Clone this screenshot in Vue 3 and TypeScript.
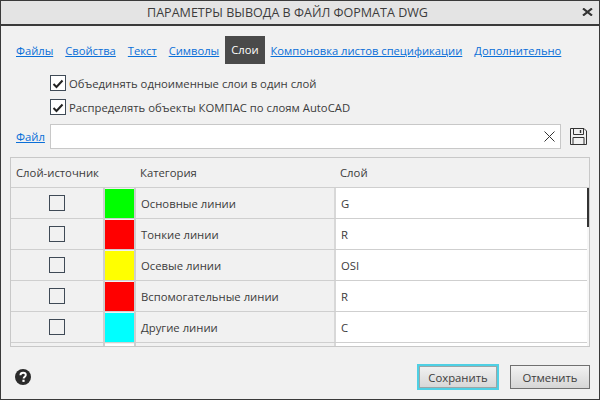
<script setup lang="ts">
const tabs = [
  { label: 'Файлы', active: false },
  { label: 'Свойства', active: false },
  { label: 'Текст', active: false },
  { label: 'Символы', active: false },
  { label: 'Слои', active: true },
  { label: 'Компоновка листов спецификации', active: false },
  { label: 'Дополнительно', active: false },
]
const rows = [
  { color: '#00ff00', name: 'Основные линии', layer: 'G' },
  { color: '#ff0000', name: 'Тонкие линии', layer: 'R' },
  { color: '#ffff00', name: 'Осевые линии', layer: 'OSI' },
  { color: '#ff0000', name: 'Вспомогательные линии', layer: 'R' },
  { color: '#00ffff', name: 'Другие линии', layer: 'C' },
  { color: '#ffffff', name: '', layer: '' },
]
</script>

<template>
  <div class="window">
    <header class="titlebar">
      <span class="title">ПАРАМЕТРЫ ВЫВОДА В ФАЙЛ ФОРМАТА DWG</span>
      <svg class="close" width="11" height="8" viewBox="0 0 11 8">
        <path d="M1 .5 10 7.5M10 .5 1 7.5" stroke="#333" stroke-width="2.2" fill="none" />
      </svg>
    </header>

    <nav class="tabs">
      <a v-for="t in tabs" :key="t.label" class="tab" :class="{ active: t.active }">{{ t.label }}</a>
    </nav>

    <div class="options">
      <label class="check">
        <span class="box">
          <svg width="14" height="14" viewBox="0 0 14 14">
            <path d="M2.5 8 5.5 11 11.5 4.5" stroke="#222" stroke-width="2" fill="none" />
          </svg>
        </span>
        Объединять одноименные слои в один слой
      </label>
      <label class="check">
        <span class="box">
          <svg width="14" height="14" viewBox="0 0 14 14">
            <path d="M2.5 8 5.5 11 11.5 4.5" stroke="#222" stroke-width="2" fill="none" />
          </svg>
        </span>
        Распределять объекты КОМПАС по слоям AutoCAD
      </label>
    </div>

    <div class="file-row">
      <a class="file-link">Файл</a>
      <div class="input">
        <svg width="11" height="11" viewBox="0 0 11 11">
          <path d="M.5 .5 10.5 10.5M10.5 .5 .5 10.5" stroke="#333" stroke-width="1" fill="none" />
        </svg>
      </div>
      <svg class="save" width="17" height="17" viewBox="0 0 17 17">
        <path d="M.5.5H14L16.5 3V16.5H.5Z" fill="none" stroke="#333" />
        <path d="M3.5.5V6.5H13.5V.5" fill="none" stroke="#333" />
        <path d="M10.5 2V5" stroke="#333" stroke-width="1.4" />
        <path d="M3 16.5V9.5H14V16.5" fill="none" stroke="#333" />
      </svg>
    </div>

    <div class="table">
      <div class="thead">
        <span class="h1">Слой-источник</span>
        <span class="h2">Категория</span>
        <span class="h3">Слой</span>
      </div>
      <div class="tbody">
        <div v-for="(r, i) in rows" :key="i" class="row">
          <div class="c-check"><span class="box empty"></span></div>
          <div class="c-color" :style="{ backgroundColor: r.color }"></div>
          <div class="c-name">{{ r.name }}</div>
          <div class="c-layer">{{ r.layer }}</div>
        </div>
        <div class="track"></div>
        <div class="thumb"></div>
      </div>
    </div>

    <footer class="footer">
      <svg class="help" width="16" height="16" viewBox="0 0 16 16">
        <circle cx="8" cy="8" r="8" fill="#2b2b2b" />
        <path d="M5.4 6.2C5.5 4.6 6.6 3.8 8.1 3.8 9.7 3.8 10.8 4.7 10.8 6 10.8 7.6 8.6 7.9 8.6 9.6" fill="none" stroke="#fff" stroke-width="1.9" />
        <rect x="7.4" y="10.7" width="2.2" height="2.2" fill="#fff" />
      </svg>
      <div class="buttons">
        <button class="btn primary">Сохранить</button>
        <button class="btn">Отменить</button>
      </div>
    </footer>
  </div>
</template>

<style scoped>
.window {
  width: 600px;
  height: 400px;
  box-sizing: border-box;
  border: 1px solid #3a3a3a;
  background: #f1f1f1;
  display: flex;
  flex-direction: column;
  font-family: "Open Sans", "Noto Sans", sans-serif;
  font-size: 11.3px;
  color: #3c3c3c;
  overflow: hidden;
}
.titlebar {
  height: 23px;
  flex: none;
  background: #e4e4e4;
  border-bottom: 2px solid #3a3a3a;
  display: flex;
  align-items: center;
  justify-content: center;
  position: relative;
  padding-right: 25px;
  font-size: 12.55px;
}
.close {
  position: absolute;
  right: 6px;
  top: 7px;
}
.tabs {
  display: flex;
  align-items: center;
  height: 28px;
  margin-top: 10px;
  padding-left: 15px;
  gap: 12px;
  font-size: 11.2px;
}
.tab {
  color: #0a6fd8;
  text-decoration: underline;
}
.tab.active {
  background: #4a4a4a;
  color: #fff;
  text-decoration: none;
  height: 28px;
  line-height: 28px;
  padding: 0 6px;
  margin: 0 -6px;
}
.options {
  margin-top: 11px;
  padding-left: 49px;
  display: flex;
  flex-direction: column;
  gap: 8px;
}
.check {
  display: flex;
  align-items: center;
  gap: 3px;
  height: 16px;
}
.box {
  width: 16px;
  height: 16px;
  box-sizing: border-box;
  border: 1px solid #3f4a56;
  background: #fff;
  display: flex;
  align-items: center;
  justify-content: center;
  flex: none;
}
.file-row {
  margin-top: 9px;
  padding-left: 15px;
  display: flex;
  align-items: center;
  height: 25px;
}
.file-link {
  color: #0a6fd8;
  text-decoration: underline;
  width: 34px;
}
.input {
  width: 511px;
  height: 25px;
  box-sizing: border-box;
  border: 1px solid #c8c8c8;
  background: #fff;
  display: flex;
  align-items: center;
  justify-content: flex-end;
  padding-right: 5px;
}
.save {
  margin-left: 9px;
}
.table {
  margin: 8px 0 0 9px;
  width: 580px;
  height: 190px;
  flex: none;
  box-sizing: border-box;
  border: 1px solid #c8c8c8;
  overflow: hidden;
}
.thead {
  height: 29px;
  display: flex;
  align-items: center;
  border-bottom: 1px solid #cfcfcf;
}
.h1 {
  width: 124px;
  padding-left: 5px;
  box-sizing: border-box;
}
.h2 {
  width: 200px;
  padding-left: 5px;
  box-sizing: border-box;
}
.h3 {
  padding-left: 5px;
}
.tbody {
  position: relative;
}
.row {
  display: grid;
  grid-template-columns: 94px 31px 200px 253px;
  height: 31px;
  box-sizing: border-box;
  border-bottom: 1px solid #cfcfcf;
}
.c-check {
  display: flex;
  align-items: center;
  justify-content: center;
  border-right: 2px solid #cfcfcf;
}
.c-color {
  border-right: 2px solid #cfcfcf;
  padding-top: 1px;
  background-clip: content-box;
}
.c-name {
  display: flex;
  align-items: center;
  padding-left: 5px;
  border-right: 2px solid #d8d8d8;
}
.c-layer {
  background: #fff;
  display: flex;
  align-items: center;
  padding-left: 5px;
}
.box.empty {
  background: #f1f1f1;
}
.track {
  position: absolute;
  right: 0;
  top: 0;
  bottom: 0;
  width: 2px;
  background: #f7f7f7;
}
.thumb {
  position: absolute;
  right: 0;
  top: 0;
  width: 2px;
  height: 39px;
  background: #333;
}
.footer {
  flex: 1;
  display: flex;
  align-items: center;
  justify-content: space-between;
  padding: 8px 9px 0 14px;
}
.buttons {
  display: flex;
  align-items: center;
  gap: 11px;
}
.btn {
  font: inherit;
  color: #3c3c3c;
  height: 24px;
  width: 80px;
  box-sizing: border-box;
  border: 1px solid #707070;
  background: linear-gradient(#f2f2f2, #d6d6d6);
  padding: 0;
}
.btn.primary {
  width: 82px;
  height: 26px;
  border: 2px solid #4fd0e4;
  box-shadow: inset 0 0 0 1px #9aa6a8;
}
</style>
